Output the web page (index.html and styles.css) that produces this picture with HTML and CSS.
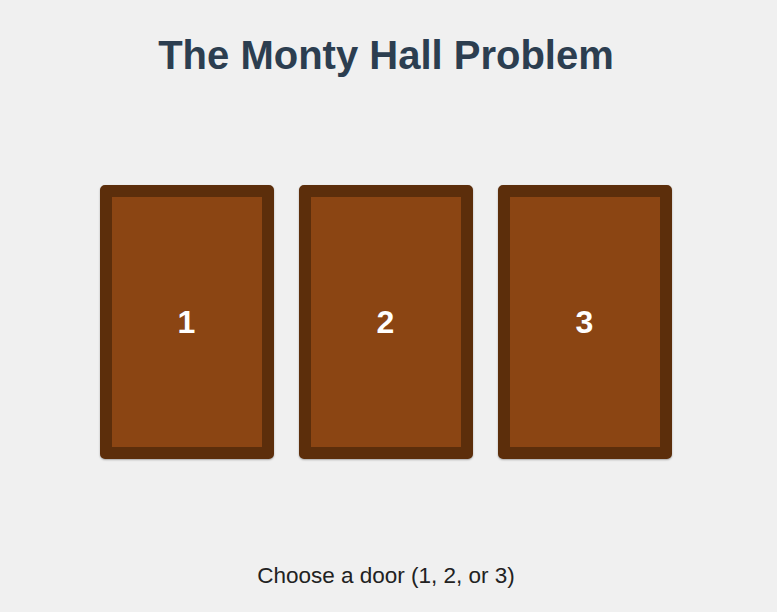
FILE: index.html
```html
<!DOCTYPE html>
<html lang="en">
<head>
    <meta charset="UTF-8">
    <meta name="viewport" content="width=device-width, initial-scale=1.0">
    <title>The Monty Hall Problem</title>
    <link rel="stylesheet" href="styles.css">
</head>
<body>

<div class="game">
    <h1>The Monty Hall Problem</h1>

    <div class="doors">
        <div class="door" data-door="1"><span>1</span></div>
        <div class="door" data-door="2"><span>2</span></div>
        <div class="door" data-door="3"><span>3</span></div>
    </div>

    <p class="message" id="message">Choose a door (1, 2, or 3)</p>
</div>

</body>
</html>
```

FILE: styles.css
```css
/* Page layout */
* {
    box-sizing: border-box;
    margin: 0;
    padding: 0;
}

body {
    font-family: Arial, 'Liberation Sans', sans-serif;
    background-color: #f0f0f0;
    color: #222;
    padding-right: 5px;
}

.game {
    display: flex;
    flex-direction: column;
    align-items: center;
    padding-top: 30px;
}

h1 {
    font-size: 40px;
    color: #2c3e50;
    line-height: 50px;
}

/* Doors */
.doors {
    display: flex;
    gap: 25px;
    margin-top: 105px;
    margin-right: 1px;
}

.door {
    width: 174px;
    height: 274px;
    background-color: #8b4513;
    border: 12px solid #5c2e0b;
    border-radius: 5px;
    box-shadow: 0 1px 2px rgba(0, 0, 0, 0.3);
    display: flex;
    justify-content: center;
    align-items: center;
    cursor: pointer;
}

.door span {
    color: #fff;
    font-size: 32px;
    font-weight: bold;
}

.message {
    font-size: 22.5px;
    margin-top: 104px;
}
```
